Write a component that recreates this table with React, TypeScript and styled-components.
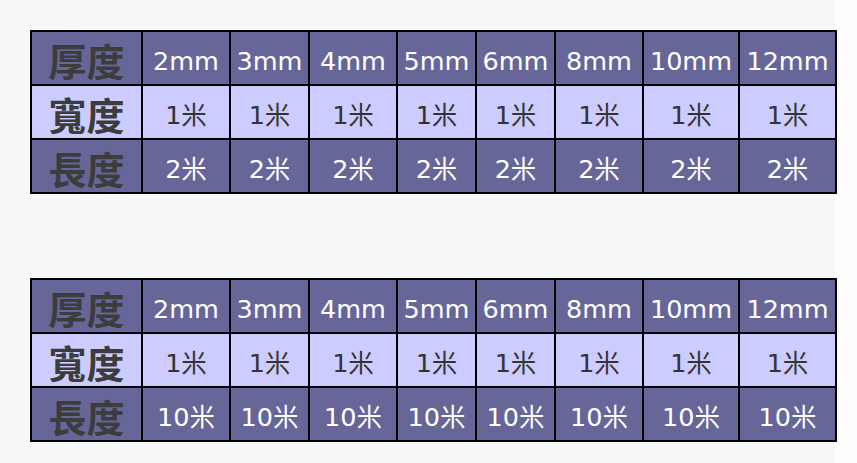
import React from "react";
import styled, { createGlobalStyle } from "styled-components";

const Global = createGlobalStyle`
  html, body {
    margin: 0;
    padding: 0;
    background: #fdfdfe;
  }
  body {
    font-family: "DejaVu Sans", "Noto Sans CJK TC", sans-serif;
  }
`;

const Page = styled.div`
  width: 835px;
  box-sizing: border-box;
  padding: 30px 0 30px 30px;
  background: #f7f8fa;
  display: flex;
  flex-direction: column;
  gap: 84px;
`;

const Table = styled.table`
  border-collapse: collapse;
  table-layout: fixed;
  width: 805px;
`;

const Row = styled.tr<{ $dark: boolean }>`
  height: 54px;
  background: ${(p) => (p.$dark ? "#666699" : "#ccccff")};
  color: ${(p) => (p.$dark ? "#ffffff" : "#333333")};
`;

const Head = styled.th`
  border: 2px solid #000;
  padding: 3px 0 0;
  font-family: "Noto Sans CJK TC", "DejaVu Sans", sans-serif;
  font-weight: 700;
  font-size: 38px;
  line-height: 1;
  color: #3c3c3c;
  text-align: center;
  vertical-align: middle;
`;

const Cell = styled.td`
  border: 2px solid #000;
  padding: 7px 0 0;
  font-family: "DejaVu Sans", "Noto Sans CJK TC", sans-serif;
  font-size: 25.5px;
  line-height: 1;
  text-align: center;
  vertical-align: middle;
  white-space: nowrap;
`;

const colWidths = [111, 88, 79, 88, 79, 79, 88, 96, 97];
const sizes = ["2mm", "3mm", "4mm", "5mm", "6mm", "8mm", "10mm", "12mm"];

function SpecTable({ length }: { length: string }) {
  return (
    <Table>
      <colgroup>
        {colWidths.map((w, i) => (
          <col key={i} style={{ width: w }} />
        ))}
      </colgroup>
      <tbody>
        <Row $dark>
          <Head>厚度</Head>
          {sizes.map((s) => (
            <Cell key={s}>{s}</Cell>
          ))}
        </Row>
        <Row $dark={false}>
          <Head>寬度</Head>
          {sizes.map((s) => (
            <Cell key={s}>1米</Cell>
          ))}
        </Row>
        <Row $dark>
          <Head>長度</Head>
          {sizes.map((s) => (
            <Cell key={s}>{length}</Cell>
          ))}
        </Row>
      </tbody>
    </Table>
  );
}

export default function App() {
  return (
    <>
      <Global />
      <Page>
        <SpecTable length="2米" />
        <SpecTable length="10米" />
      </Page>
    </>
  );
}
